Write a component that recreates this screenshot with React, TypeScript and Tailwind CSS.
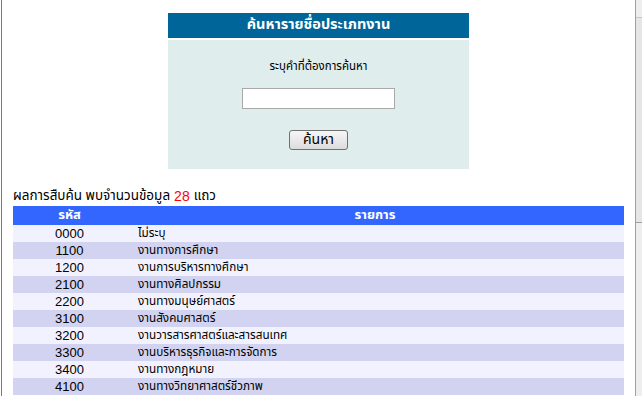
import React from "react";

const rows: [string, string][] = [
  ["0000", "ไม่ระบุ"],
  ["1100", "งานทางการศึกษา"],
  ["1200", "งานการบริหารทางศึกษา"],
  ["2100", "งานทางศิลปกรรม"],
  ["2200", "งานทางมนุษย์ศาสตร์"],
  ["3100", "งานสังคมศาสตร์"],
  ["3200", "งานวารสารศาสตร์และสารสนเทศ"],
  ["3300", "งานบริหารธุรกิจและการจัดการ"],
  ["3400", "งานทางกฎหมาย"],
  ["4100", "งานทางวิทยาศาสตร์ชีวภาพ"],
];

const font = { fontFamily: "Tahoma, 'Noto Sans Thai', 'Liberation Sans', sans-serif" };

export default function App() {
  return (
    <div className="flex h-[396px] w-[642px] overflow-hidden bg-white text-black" style={font}>
      <div className="w-px shrink-0 bg-white" />
      <div className="w-px shrink-0 bg-[#7a7a7a]" />
      <div className="flex w-[633px] shrink-0 flex-col items-center">
        <div className="mt-[13px] flex w-[301px] flex-col">
          <div className="flex h-[25px] items-center justify-center bg-[#006699] text-[14.5px] font-bold leading-[25px] text-white">
            ค้นหารายชื่อประเภทงาน
          </div>
          <div className="h-[2px] bg-white" />
          <div className="flex h-[129px] flex-col items-center bg-[#DFEDED]">
            <div className="mt-[19px] h-[15px] text-[11.5px] leading-[15px]">ระบุคำที่ต้องการค้นหา</div>
            <div className="mt-[14px] h-[21px] w-[153px] border border-[#a9a9a9] bg-white" />
            <div className="mt-[21px] flex h-[20px] w-[59px] items-center justify-center rounded-[3px] border border-[#707070] bg-gradient-to-b from-[#f6f6f6] to-[#dcdcdc] text-[14px] leading-none">
              ค้นหา
            </div>
          </div>
        </div>
        <div className="mt-[20px] flex h-[17px] w-[611px] items-start text-[13.5px] leading-[15px]">
          <span>ผลการสืบค้น พบจำนวนข้อมูล </span>
          <span className="mx-[4px] text-[14px] text-[#ff0000]" style={{ fontFamily: "'Liberation Sans', sans-serif" }}>28</span>
          <span>แถว</span>
        </div>
        <div className="flex w-[611px] flex-col">
          <div className="flex h-[19px] bg-[#3366FF] text-[13px] font-bold leading-[19px] text-white">
            <div className="w-[113px] text-center">รหัส</div>
            <div className="flex-1 text-center">รายการ</div>
          </div>
          {rows.map(([code, name], i) => (
            <div
              key={code}
              className={`flex h-[17px] items-center leading-[17px] ${i % 2 === 0 ? "bg-[#F2F2FF]" : "bg-[#D1D3F1]"}`}
            >
              <div
                className="w-[113px] text-center text-[13px]"
                style={{ fontFamily: "'Liberation Sans', sans-serif" }}
              >
                {code}
              </div>
              <div className="pl-[12px] text-[11.7px]">{name}</div>
            </div>
          ))}
        </div>
      </div>
      <div className="flex h-full flex-1 flex-col bg-[#eeeeee]">
        <div className="flex h-full">
          <div className="w-px bg-[#a0a0a0]" />
          <div className="flex flex-1 flex-col">
            <div className="h-[18px] border-b border-[#c8c8c8]" />
            <div className="h-[205px] border-b border-[#a0a0a0] bg-[#e6e6e6]" />
            <div className="flex-1" />
          </div>
        </div>
      </div>
    </div>
  );
}
